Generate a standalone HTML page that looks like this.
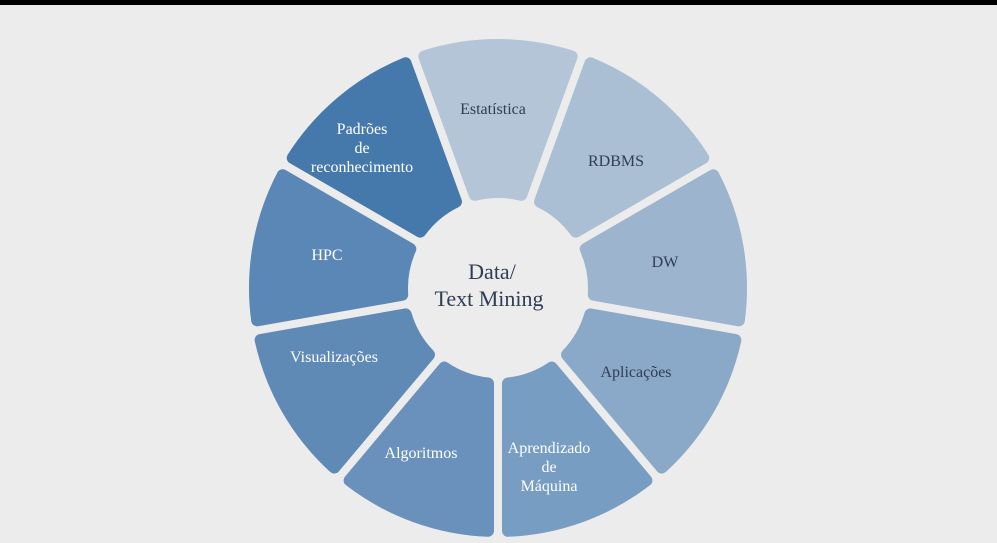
<!DOCTYPE html>
<html><head><meta charset="utf-8"><style>
html,body{margin:0;padding:0;width:997px;height:543px;overflow:hidden;background:#ececec}
#bar{position:absolute;left:0;top:0;width:997px;height:5px;background:#000}
svg{position:absolute;left:0;top:0}
text{font-family:"Liberation Serif",serif;font-size:16px}
</style></head><body>
<div id="bar"></div>
<svg id="s" width="997" height="543" viewBox="0 0 997 543"></svg>
<script>
var cx=498,cy=288,Ro=243,Ri=96,g=10;
var cols=["#b4c5d8","#abbfd4","#9cb4ce","#8aa9c8","#789dc2","#6991bb","#5f8ab6","#5a87b5","#4679ab"];
var h="";
for(var i=0;i<9;i++){
 var a0=(-110+40*i)*Math.PI/180,a1=a0+40*Math.PI/180;
 var oo=g/Ro,oi=g/Ri;
 function p(r,a){return (cx+r*Math.cos(a)).toFixed(2)+","+(cy+r*Math.sin(a)).toFixed(2);}
 var d="M"+p(Ro,a0+oo)+" A"+Ro+","+Ro+" 0 0 1 "+p(Ro,a1-oo)+" L"+p(Ri,a1-oi)+" A"+Ri+","+Ri+" 0 0 0 "+p(Ri,a0+oi)+"Z";
 h+='<path d="'+d+'" fill="'+cols[i]+'" stroke="'+cols[i]+'" stroke-width="12" stroke-linejoin="round"/>';
}
var L=[["Estatística",493,114,0],["RDBMS",616,166,0],["DW",665,267,0],["Aplicações",636,377,0],
["Aprendizado|de|Máquina",549,453,1],["Algoritmos",421,458,1],["Visualizações",334,362,1],["HPC",327,260,1],["Padrões|de|reconhecimento",362,134,1]];
L.forEach(function(l){
 var lines=l[0].split("|");
 lines.forEach(function(t,j){
  h+='<text x="'+l[1]+'" y="'+(l[2]+j*19)+'" text-anchor="middle" fill="'+(l[3]?"#ffffff":"#2f3d55")+'">'+t+'</text>';
 });
});
h+='<text x="492" y="279" text-anchor="middle" fill="#2f3d55" style="font-size:22px">Data/</text>';
h+='<text x="489" y="306" text-anchor="middle" fill="#2f3d55" style="font-size:22px">Text Mining</text>';
document.getElementById("s").innerHTML=h;
</script>
</body></html>
